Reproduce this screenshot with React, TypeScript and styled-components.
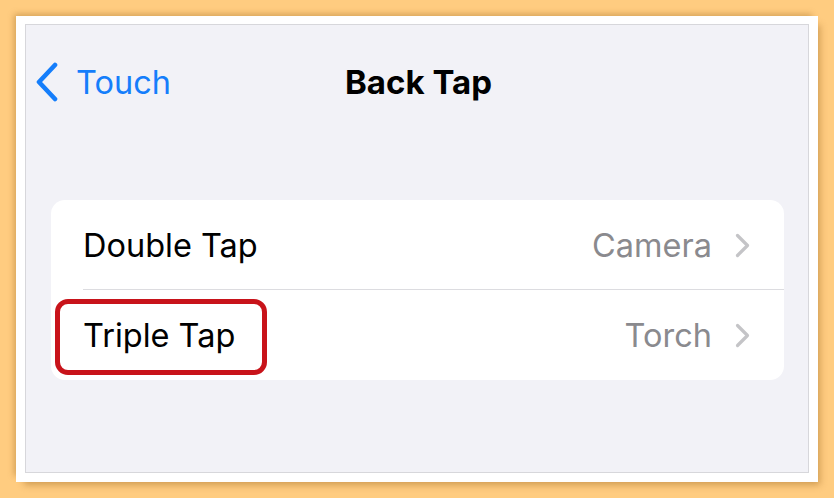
import styled, { createGlobalStyle } from 'styled-components';

const GlobalStyle = createGlobalStyle`
  html, body {
    margin: 0;
    padding: 0;
    background: #ffcc80;
  }
  body {
    font-family: Inter, 'Liberation Sans', Arial, sans-serif;
    -webkit-font-smoothing: antialiased;
  }
`;

const Page = styled.div`
  width: 834px;
  height: 498px;
  padding: 16px;
  box-sizing: border-box;
  background: #ffcc80;
`;

const Frame = styled.div`
  position: relative;
  width: 802px;
  height: 466px;
  padding: 8px 9px 9px 9px;
  box-sizing: border-box;
  background: #fff;
  box-shadow: -4px -4px 6px -2px rgba(150, 100, 30, 0.4),
    5px 6px 7px -3px rgba(150, 100, 30, 0.45);
`;

const Screen = styled.div`
  height: 100%;
  box-sizing: border-box;
  background: #f2f2f7;
  border: 1px solid #d7d7db;
  display: flex;
  flex-direction: column;
  padding: 0 24px 0 25px;
`;

const NavBar = styled.div`
  position: relative;
  height: 116px;
  display: flex;
  align-items: center;
  justify-content: center;
`;

const BackButton = styled.div`
  position: absolute;
  left: -16px;
  top: 37px;
  display: flex;
  align-items: center;
  gap: 17px;
  color: #157efb;
  font-size: 32.5px;
`;

const Title = styled.div`
  font-size: 33px;
  font-weight: 700;
  color: #000;
  margin-top: -2px;
  margin-left: 2px;
`;

const Card = styled.div`
  margin-top: 59px;
  background: #fff;
  border-radius: 14px;
  display: flex;
  flex-direction: column;
`;

const Row = styled.div<{ $divider?: boolean }>`
  position: relative;
  height: 90px;
  display: flex;
  align-items: center;
  padding-left: 32px;
  padding-right: 33px;
  box-sizing: border-box;
  &::after {
    content: '';
    display: ${(p) => (p.$divider ? 'block' : 'none')};
    position: absolute;
    left: 32px;
    right: 0;
    bottom: 0;
    height: 1px;
    background: #dcdce0;
  }
`;

const Label = styled.div`
  flex: 1;
  font-size: 32.5px;
  color: #000;
`;

const Value = styled.div`
  font-size: 32.5px;
  color: #8a8a8e;
  margin-right: 23px;
`;

const Highlight = styled.div`
  position: absolute;
  left: 4px;
  top: 9px;
  width: 212px;
  height: 76px;
  box-sizing: border-box;
  border: 5px solid #c8131a;
  border-radius: 13px;
`;

const Chevron = () => (
  <svg width="16" height="25" viewBox="0 0 16 25">
    <path
      d="M2.5 2.5 L12.5 12.5 L2.5 22.5"
      fill="none"
      stroke="#c4c4c7"
      strokeWidth="3.2"
      strokeLinecap="round"
      strokeLinejoin="round"
    />
  </svg>
);

const BackChevron = () => (
  <svg width="24" height="40" viewBox="0 0 24 40">
    <path
      d="M20 3 L4 20 L20 37"
      fill="none"
      stroke="#157efb"
      strokeWidth="4.6"
      strokeLinecap="round"
      strokeLinejoin="round"
    />
  </svg>
);

export default function App() {
  return (
    <Page>
      <GlobalStyle />
      <Frame>
        <Screen>
          <NavBar>
            <BackButton>
              <BackChevron />
              <span>Touch</span>
            </BackButton>
            <Title>Back Tap</Title>
          </NavBar>
          <Card>
            <Row $divider>
              <Label>Double Tap</Label>
              <Value>Camera</Value>
              <Chevron />
            </Row>
            <Row>
              <Highlight />
              <Label>Triple Tap</Label>
              <Value>Torch</Value>
              <Chevron />
            </Row>
          </Card>
        </Screen>
      </Frame>
    </Page>
  );
}
